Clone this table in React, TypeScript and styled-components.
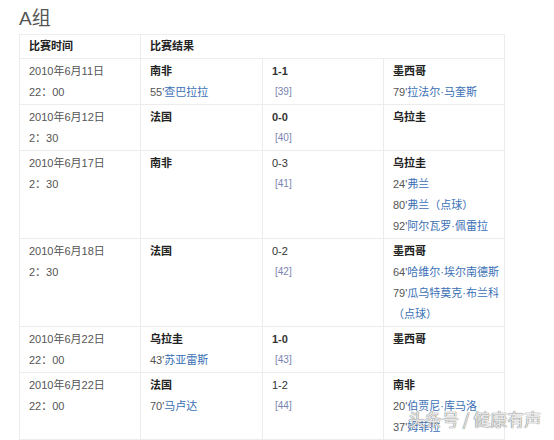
import React from "react";
import styled, { createGlobalStyle } from "styled-components";

const Global = createGlobalStyle`
  html, body { margin: 0; padding: 0; background: #fff; }
  body { font-family: "Liberation Sans", Arial, "Noto Sans CJK SC", sans-serif; }
`;

const Page = styled.div`
  position: relative;
  width: 554px;
  height: 440px;
  overflow: hidden;
  padding: 7px 0 0 19px;
  box-sizing: border-box;
`;

const Title = styled.h2`
  margin: 0 0 4px 0;
  font-weight: normal;
  font-size: 19px;
  line-height: 23px;
  color: #555;
  font-family: "Liberation Sans", Arial, "Noto Sans CJK SC", sans-serif;
`;

const Table = styled.table`
  border-collapse: collapse;
  table-layout: fixed;
  width: 485px;
  border: 1px solid #e4e4e4;
  font-size: 11px;
  line-height: 21px;
  color: #222;
`;

const Th = styled.th`
  text-align: left;
  font-weight: bold;
  padding: 1px 9px 1px 9px;
  border: 1px solid #ececec;
  color: #222;
`;

const Td = styled.td<{ $pad?: number }>`
  vertical-align: top;
  padding: 2px 4px 1px ${(p) => p.$pad ?? 9}px;
  border: 1px solid #ececec;
`;

const DateText = styled.div`
  color: #555;
`;

const Team = styled.div`
  font-weight: bold;
  color: #222;
`;

const Goal = styled.div`
  color: #555;
  white-space: normal;
`;

const Link = styled.span`
  color: #3a6fb5;
`;

const Score = styled.div<{ $bold?: boolean }>`
  color: #333;
  font-weight: ${(p) => (p.$bold ? "bold" : "normal")};
`;

const Ref = styled.div`
  color: #7a83b0;
  font-size: 10px;
  padding-left: 3px;
  line-height: 19px;
`;

const Watermark = styled.div`
  position: absolute;
  left: 408px;
  top: 408px;
  font-size: 17px;
  line-height: 22px;
  color: #e8e8e8;
  letter-spacing: 0px;
  text-shadow: 0 0 1px #777, 0 0 1px #777;
  font-family: "Noto Sans CJK SC", sans-serif;
  white-space: nowrap;
`;

type Goalx = { min: string; name: string; extra?: string };
type Match = {
  date: string;
  time: string;
  home: string;
  homeGoals: Goalx[];
  score: string;
  bold?: boolean;
  ref: string;
  away: string;
  awayGoals: Goalx[];
};

const matches: Match[] = [
  {
    date: "2010年6月11日",
    time: "22：00",
    home: "南非",
    homeGoals: [{ min: "55'", name: "查巴拉拉" }],
    score: "1-1",
    bold: true,
    ref: "[39]",
    away: "墨西哥",
    awayGoals: [{ min: "79'", name: "拉法尔·马奎斯" }],
  },
  {
    date: "2010年6月12日",
    time: "2：30",
    home: "法国",
    homeGoals: [],
    score: "0-0",
    bold: true,
    ref: "[40]",
    away: "乌拉圭",
    awayGoals: [],
  },
  {
    date: "2010年6月17日",
    time: "2：30",
    home: "南非",
    homeGoals: [],
    score: "0-3",
    ref: "[41]",
    away: "乌拉圭",
    awayGoals: [
      { min: "24'", name: "弗兰" },
      { min: "80'", name: "弗兰（点球）" },
      { min: "92'", name: "阿尔瓦罗·佩雷拉" },
    ],
  },
  {
    date: "2010年6月18日",
    time: "2：30",
    home: "法国",
    homeGoals: [],
    score: "0-2",
    ref: "[42]",
    away: "墨西哥",
    awayGoals: [
      { min: "64'", name: "哈维尔·埃尔南德斯" },
      { min: "79'", name: "瓜乌特莫克·布兰科（点球）" },
    ],
  },
  {
    date: "2010年6月22日",
    time: "22：00",
    home: "乌拉圭",
    homeGoals: [{ min: "43'", name: "苏亚雷斯" }],
    score: "1-0",
    bold: true,
    ref: "[43]",
    away: "墨西哥",
    awayGoals: [],
  },
  {
    date: "2010年6月22日",
    time: "22：00",
    home: "法国",
    homeGoals: [{ min: "70'", name: "马卢达" }],
    score: "1-2",
    ref: "[44]",
    away: "南非",
    awayGoals: [
      { min: "20'", name: "伯贾尼·库马洛" },
      { min: "37'", name: "姆菲拉" },
    ],
  },
];

const Goals = ({ goals }: { goals: Goalx[] }) => (
  <>
    {goals.map((g, i) => (
      <Goal key={i}>
        {g.min}
        <Link>{g.name}</Link>
      </Goal>
    ))}
  </>
);

export default function App() {
  return (
    <Page>
      <Global />
      <Title>A组</Title>
      <Table>
        <colgroup>
          <col style={{ width: 121 }} />
          <col style={{ width: 122 }} />
          <col style={{ width: 121 }} />
          <col style={{ width: 121 }} />
        </colgroup>
        <thead>
          <tr>
            <Th>比赛时间</Th>
            <Th colSpan={3}>比赛结果</Th>
          </tr>
        </thead>
        <tbody>
          {matches.map((m, i) => (
            <tr key={i}>
              <Td>
                <DateText>{m.date}</DateText>
                <DateText>{m.time}</DateText>
              </Td>
              <Td>
                <Team>{m.home}</Team>
                <Goals goals={m.homeGoals} />
              </Td>
              <Td>
                <Score $bold={m.bold}>{m.score}</Score>
                <Ref>{m.ref}</Ref>
              </Td>
              <Td>
                <Team>{m.away}</Team>
                <Goals goals={m.awayGoals} />
              </Td>
            </tr>
          ))}
        </tbody>
      </Table>
      <Watermark>头条号 / 健康有声</Watermark>
    </Page>
  );
}
